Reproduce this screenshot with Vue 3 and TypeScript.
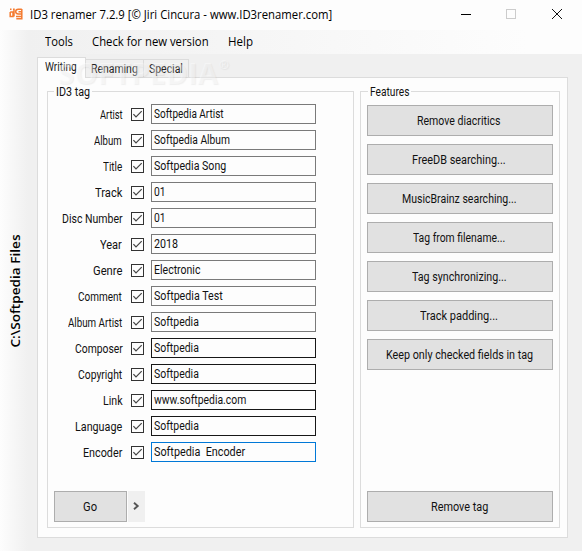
<script setup lang="ts">
import { ref, type Directive } from 'vue'

interface Item {
  text: string
  width: number
}
interface Field {
  label: string
  labelWidth: number
  value: string
  valueWidth: number
  tone: string
  checked: boolean
}

const field = (label: string, labelWidth: number, value: string, valueWidth: number, tone = 'grey'): Field => ({
  label, labelWidth, value, valueWidth, tone, checked: true,
})

const fields = ref<Field[]>([
  field('Artist', 22.5, 'Softpedia Artist', 70),
  field('Album', 28, 'Softpedia Album', 76),
  field('Title', 19, 'Softpedia Song', 72.5),
  field('Track', 27, '01', 12),
  field('Disc Number', 60.5, '01', 12),
  field('Year', 22, '2018', 24),
  field('Genre', 29, 'Electronic', 46.5),
  field('Comment', 44, 'Softpedia Test', 68.5),
  field('Album Artist', 54.5, 'Softpedia', 44.5),
  field('Composer', 47.5, 'Softpedia', 44.5, 'dark'),
  field('Copyright', 44, 'Softpedia', 44.5, 'dark'),
  field('Link', 19.5, 'www.softpedia.com', 92.5, 'dark'),
  field('Language', 47.5, 'Softpedia', 44.5, 'dark'),
  field('Encoder', 39.5, 'Softpedia  Encoder', 91, 'focus'),
])

const menu: Item[] = [
  { text: 'Tools', width: 28 },
  { text: 'Check for new version', width: 117 },
  { text: 'Help', width: 25 },
]
const tabs: Item[] = [
  { text: 'Writing', width: 32 },
  { text: 'Renaming', width: 47 },
  { text: 'Special', width: 34 },
]
const features: Item[] = [
  { text: 'Remove diacritics', width: 83.5 },
  { text: 'FreeDB searching...', width: 93.5 },
  { text: 'MusicBrainz searching...', width: 115 },
  { text: 'Tag from filename...', width: 92.5 },
  { text: 'Tag synchronizing...', width: 94.5 },
  { text: 'Track padding...', width: 78 },
  { text: 'Keep only checked fields in tag', width: 147 },
]
const active = ref(0)

// Condenses or widens a caption so that it fills the given width.
const vFit: Directive<HTMLElement, number> = {
  mounted(el, { value }) {
    el.style.display = 'inline-block'
    const natural = el.offsetWidth
    el.style.width = `${value}px`
    el.style.transformOrigin = '0 50%'
    el.style.transform = `scaleX(${value / natural})`
  },
}
</script>

<template>
  <div class="window">
    <header class="titlebar">
      <svg class="logo" width="15" height="13" viewBox="0 0 15 13" fill="none" stroke="#f47b30" stroke-width="1.5">
        <path d="M1 1.2H2.5M1.2 4V8.5H4V4H1.2M4 1.2H5V8.5" />
        <path d="M12.8 1.2H9.2Q6.7 1.2 6.7 3.6T9.2 6H12.8M12.8 1V10.8H7.3M12.5 3.7H9.5M7 8.4H12.5" />
      </svg>
      <h1><span v-fit="302">ID3 renamer 7.2.9 [© Jiri Cincura - www.ID3renamer.com]</span></h1>
      <svg class="controls" width="105" height="12" viewBox="0 0 105 12" fill="none" shape-rendering="crispEdges">
        <path d="M0 6.5H10" stroke="#000" />
        <rect x="45.5" y="1.5" width="9" height="9" stroke="#ccc" />
        <path d="M91 1L101 11M101 1L91 11" stroke="#111" shape-rendering="auto" />
      </svg>
    </header>
    <div class="body">
      <aside class="path"><div class="turned"><span v-fit="113">C:\Softpedia Files</span></div></aside>
      <div class="main">
        <nav class="menu">
          <span v-for="m in menu" :key="m.text" v-fit="m.width">{{ m.text }}</span>
        </nav>
        <div class="tabs">
          <button
            v-for="(t, i) in tabs"
            :key="t.text"
            class="tab"
            :class="[{ active: i === active }, t.text.toLowerCase()]"
            @click="active = i"
          ><span v-fit="t.width">{{ t.text }}</span></button>
          <div class="watermark"><span v-fit="160">SOFTPEDIA</span><sup>®</sup></div>
        </div>
        <section class="panel">
          <div class="group tag">
            <div class="legend"><span v-fit="34">ID3 tag</span></div>
            <div class="fields">
              <div v-for="f in fields" :key="f.label" class="row">
                <span class="label"><span v-fit="f.labelWidth">{{ f.label }}</span></span>
                <svg class="check" width="13" height="13" viewBox="0 0 13 13" fill="none" @click="f.checked = !f.checked">
                  <rect x=".5" y=".5" width="12" height="12" stroke="#333" />
                  <path v-if="f.checked" d="M2.4 6.2L5 8.9L10.7 3.2" stroke="#444" stroke-width="1.2" />
                </svg>
                <div class="input" :class="f.tone"><span v-fit="f.valueWidth">{{ f.value }}</span></div>
              </div>
            </div>
            <div class="actions">
              <button class="btn go"><span v-fit="14">Go</span></button>
              <button class="more">
                <svg width="7" height="8" viewBox="0 0 7 8" fill="none" stroke="#555" stroke-width="1.9">
                  <path d="M1 .8L4.7 4L1 7.2" />
                </svg>
              </button>
            </div>
          </div>
          <div class="group features">
            <div class="legend"><span v-fit="39">Features</span></div>
            <div class="list">
              <button v-for="b in features" :key="b.text" class="btn"><span v-fit="b.width">{{ b.text }}</span></button>
            </div>
            <button class="btn remove"><span v-fit="57">Remove tag</span></button>
          </div>
        </section>
      </div>
    </div>
  </div>
</template>

<style>
body {
  margin: 0;
}
</style>

<style scoped>
.window {
  box-sizing: border-box;
  width: 582px;
  height: 551px;
  display: flex;
  flex-direction: column;
  overflow: hidden;
  background: #fdfdfd;
  color: #111;
  font: 12px/14px Roboto, "Liberation Sans", sans-serif;
}
.window span {
  white-space: pre;
}
.titlebar {
  flex: 0 0 30px;
  box-sizing: border-box;
  display: flex;
  align-items: center;
  padding: 0 16px 0 9px;
  color: #000;
}
.logo {
  margin: -1px 6px 0 0;
}
h1 {
  flex: 1;
  margin: 0;
  font: 12px/16px "Open Sans", "Noto Sans", sans-serif;
}
.controls {
  margin-top: -2px;
}
.body {
  flex: 1;
  display: flex;
}
.path {
  flex: 0 0 28px;
  width: 28px;
  min-width: 0;
  display: flex;
  align-items: center;
  justify-content: center;
  background: linear-gradient(90deg, #fdfdfd, #f0f0f0);
  color: #000;
  font: 600 13px/16px "Open Sans", "Noto Sans", sans-serif;
}
.turned {
  flex: none;
  display: flex;
  width: 113px;
  transform: rotate(-90deg);
}
.turned span {
  flex: none;
}
.main {
  flex: 1;
  min-width: 0;
  display: flex;
  flex-direction: column;
  background: #f0f0f0;
}
.menu {
  flex: 0 0 24px;
  display: flex;
  align-items: center;
  gap: 19px;
  padding-left: 17px;
  background: linear-gradient(90deg, #f0f0f0, #fdfdfd 90%);
  color: #000;
  font: 12px/16px "Open Sans", "Noto Sans", sans-serif;
}
.tabs {
  position: relative;
  height: 23px;
  display: flex;
  align-items: flex-end;
  padding-left: 9px;
}
.tab {
  box-sizing: border-box;
  height: 18px;
  padding: 1px 1px 0 0;
  border: 1px solid #dcdcdc;
  border-width: 1px 1px 0 0;
  background: #f0f0f0;
  color: #222;
  font: inherit;
}
.tab.active {
  position: relative;
  height: 21px;
  margin-bottom: -1px;
  padding: 0 1px 2px 0;
  border-left-width: 1px;
  background: #fdfdfd;
}
.writing {
  width: 49px;
}
.renaming {
  width: 58px;
}
.special {
  width: 45px;
}
.watermark {
  position: absolute;
  left: 30px;
  top: 5px;
  display: flex;
  z-index: 1;
  pointer-events: none;
  color: rgba(255, 255, 255, 0.38);
  font: 700 28px/28px "Open Sans", sans-serif;
  text-shadow: 1px 1px 1px rgba(120, 120, 120, 0.1);
}
.watermark sup {
  margin-left: 1px;
  font-size: 12px;
  line-height: 12px;
}
.panel {
  flex: 1;
  box-sizing: border-box;
  display: flex;
  gap: 6px;
  margin: 0 14px 13px 9px;
  padding: 13px 7px 9px 9px;
  border: 1px solid #dcdcdc;
  background: #fdfdfd;
}
.group {
  box-sizing: border-box;
  display: flex;
  flex-direction: column;
  border: 1px solid #dcdcdc;
}
.tag {
  width: 307px;
  padding: 0 0 5px 6px;
}
.features {
  flex: 1;
  padding: 0 6px 5px;
}
.legend {
  align-self: flex-start;
  height: 14px;
  margin: -7px 0 0;
  padding: 0 2px;
  background: #fdfdfd;
}
.features .legend {
  margin-left: 1px;
}
.fields {
  display: flex;
  flex-direction: column;
  gap: 6px;
  margin-top: 5px;
}
.row {
  display: flex;
  height: 20px;
}
.label {
  display: flex;
  justify-content: flex-end;
  width: 68px;
  margin-right: 9px;
  padding-top: 4px;
}
.check {
  margin: 4px 7px 0 0;
}
.input {
  box-sizing: border-box;
  width: 165px;
  height: 20px;
  padding: 2px 2px;
  border: 1px solid #7a7a7a;
}
.input.dark {
  border-color: #171717;
}
.input.focus {
  border-color: #0078d7;
}
.actions {
  display: flex;
  gap: 1px;
  margin-top: auto;
}
.btn {
  box-sizing: border-box;
  height: 31px;
  padding: 1px 2px 0 0;
  border: 1px solid #adadad;
  background: #e1e1e1;
  color: #111;
  font: inherit;
}
.go {
  width: 73px;
}
.more {
  width: 17px;
  height: 31px;
  padding: 0 0 3px;
  border: 0;
  background: #f0f0f0;
}
.list {
  display: flex;
  flex-direction: column;
  gap: 8px;
  margin-top: 6px;
}
.remove {
  margin-top: auto;
}
</style>
